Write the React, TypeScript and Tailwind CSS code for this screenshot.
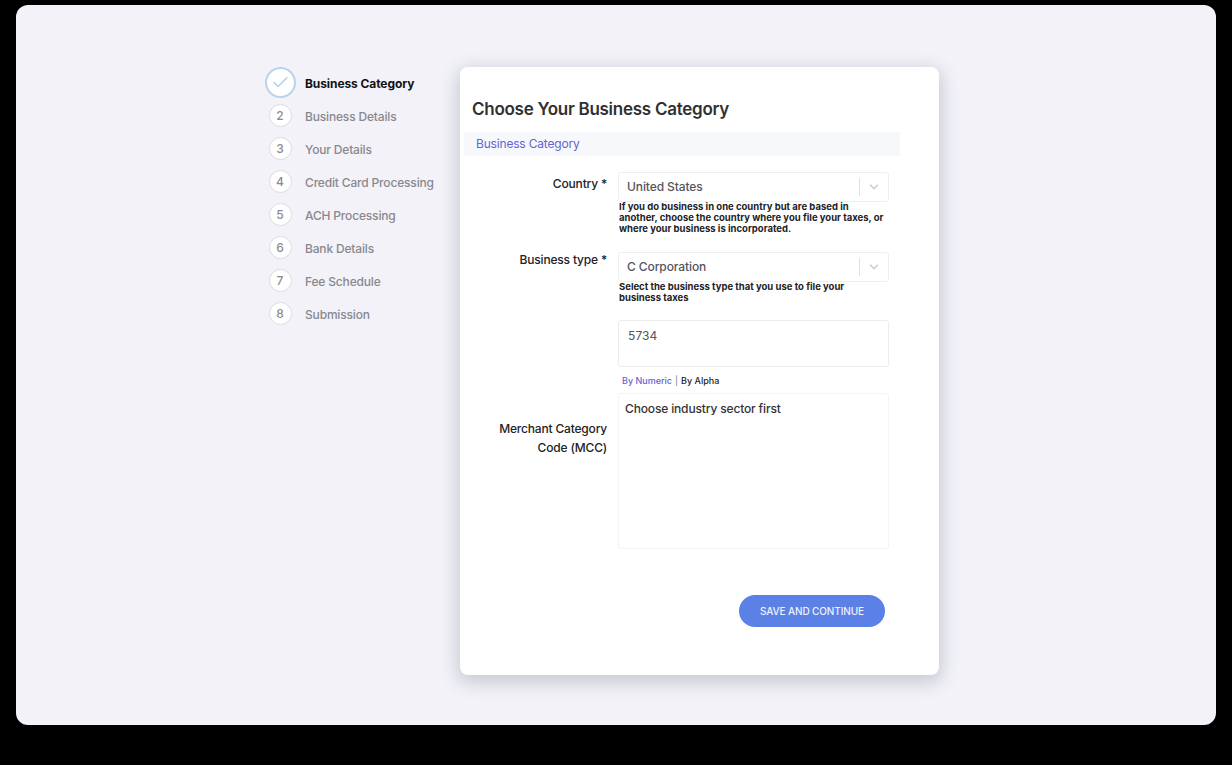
import type { ReactNode } from "react"
import { Check, ChevronDown } from "lucide-react"

const steps = [
  "Business Category",
  "Business Details",
  "Your Details",
  "Credit Card Processing",
  "ACH Processing",
  "Bank Details",
  "Fee Schedule",
  "Submission",
]

function StepList() {
  return (
    <ol className="w-[180px] ml-[248px] mt-[61px]">
      {steps.map((step, i) => (
        <li key={step} className="h-[33px] flex items-center">
          <span className="w-8 flex justify-center shrink-0">
            {i === 0 ? (
              <span className="w-[31px] h-[31px] rounded-full border-2 border-[#b9d3ee] bg-white flex items-center justify-center">
                <Check className="w-[19px] h-[19px] text-[#b5d0ea]" strokeWidth={2} />
              </span>
            ) : (
              <span className="w-[23px] h-[23px] rounded-full border border-[#dcdce0] bg-white flex items-center justify-center text-[12px] font-medium text-[#8b8b90]">
                {i + 1}
              </span>
            )}
          </span>
          <span
            className={
              i === 0
                ? "ml-[9px] mt-[3px] text-[12px] font-bold tracking-[-0.09px] text-[#111114] whitespace-nowrap"
                : "ml-[9px] mt-[3px] text-[12px] font-medium tracking-[-0.17px] text-[#88888d] whitespace-nowrap"
            }
          >
            {step}
          </span>
        </li>
      ))}
    </ol>
  )
}

function SelectBox({ value }: { value: string }) {
  return (
    <button className="w-full h-[30px] flex items-center rounded-[3px] border border-[#efeff1] bg-white pl-2 text-left">
      <span className="flex-1 text-[12px] font-medium tracking-[-0.1px] text-[#55555a]">{value}</span>
      <span className="w-px h-[18px] bg-[#e0e0e2]" />
      <span className="w-[28px] flex justify-center">
        <ChevronDown className="w-[14px] h-[14px] text-[#cfcfd2]" strokeWidth={3} />
      </span>
    </button>
  )
}

function Row({ label, children, className }: { label: ReactNode; children: ReactNode; className: string }) {
  return (
    <div className={`flex ${className}`}>
      <div className="w-[147px] mr-[11px] shrink-0 text-right text-[12px] leading-[18.5px] font-medium tracking-[-0.18px] text-[#222226]">
        {label}
      </div>
      <div className="w-[271px]">{children}</div>
    </div>
  )
}

export default function App() {
  return (
    <div className="h-[765px] bg-black px-4 pt-[5px] font-['Inter',sans-serif]">
      <main className="h-[720px] rounded-xl bg-[#f2f2f8] flex items-start overflow-hidden">
        <StepList />

        <section className="w-[479px] h-[608px] ml-4 mt-[62px] rounded-lg bg-white shadow-[0_5px_18px_2px_rgba(60,65,85,0.24)]">
          <h1 className="ml-3 pt-[30px] text-[17px] leading-6 font-semibold tracking-[-0.26px] text-[#303033]">
            Choose Your Business Category
          </h1>
          <div className="ml-1 mt-[11px] w-[436px] h-6 bg-[#f7f8fc] pl-3 flex items-center text-[12px] tracking-[-0.18px] text-[#6464d2]">
            Business Category
          </div>

          {/* Country and business type */}
          <Row className="mt-4 h-20" label={<div className="mt-[3px]">Country *</div>}>
            <SelectBox value="United States" />
            <p className="pl-px text-[9.5px] leading-[10.8px] font-bold text-[#222226] whitespace-nowrap">
              If you do business in one country but are based in
              <br />
              another, choose the country where you file your taxes, or
              <br />
              where your business is incorporated.
            </p>
          </Row>
          <Row className="h-[68px]" label={<div className="-mt-px">Business type *</div>}>
            <SelectBox value="C Corporation" />
            <p className="pl-px text-[9.5px] leading-[10.8px] font-bold text-[#222226] whitespace-nowrap">
              Select the business type that you use to file your
              <br />
              business taxes
            </p>
          </Row>

          {/* Merchant category code */}
          <Row
            className=""
            label={
              <div className="mt-[100px]">
                Merchant Category
                <br />
                Code (MCC)
              </div>
            }
          >
            <div className="h-[47px] rounded-[3px] border border-[#ececee] pl-[9px] pt-[5px] text-[12px] leading-[19px] tracking-[0.1px] text-[#55555a]">
              5734
            </div>
            <div className="h-[26px] pl-1 pt-px flex items-center gap-[3px] text-[9px] font-medium text-[#222226]">
              <a href="#" className="text-[#6464d2]">By Numeric</a>
              <span className="font-normal text-[#77777c]">|</span>
              <a href="#">By Alpha</a>
            </div>
            <div className="h-[156px] rounded-[3px] border border-[#f4f4f5] pl-[6px] pt-[5px] text-[12px] leading-[19px] font-medium tracking-[-0.15px] text-[#333337]">
              Choose industry sector first
            </div>
          </Row>

          <button className="ml-[279px] mt-[46px] w-[146px] h-8 rounded-full bg-[#5b80e6] text-[10px] font-medium tracking-[-0.12px] text-[#eef2ff]">
            SAVE AND CONTINUE
          </button>
        </section>
      </main>
    </div>
  )
}
